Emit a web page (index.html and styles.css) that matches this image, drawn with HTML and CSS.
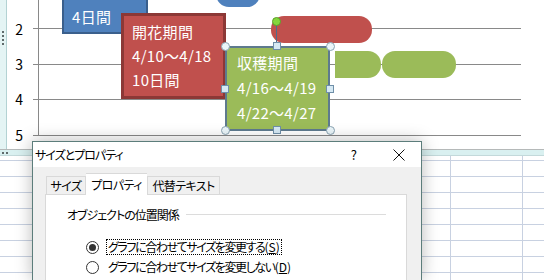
FILE: index.html
```html
<!DOCTYPE html>
<html lang="ja">
<head>
    <meta charset="UTF-8">
    <title>サイズとプロパティ</title>
    <link rel="stylesheet" href="styles.css">
</head>
<body>
    <div class="chart">
        <div class="frame-side">
            <span class="dot"></span><span class="dot"></span><span class="dot"></span><span class="dot"></span>
        </div>
        <div class="labels">
            <span>2</span>
            <span>3</span>
            <span>4</span>
            <span>5</span>
        </div>
        <div class="plot">
            <div class="grid-row"></div>
            <div class="grid-row"></div>
            <div class="grid-row"></div>
            <div class="grid-row"></div>
        </div>

        <!-- shapes on the chart canvas -->
        <div class="pill pill-blue"></div>
        <div class="box box-blue"><span>4日間</span></div>
        <div class="pill pill-red"></div>
        <div class="box box-red">
            <span>開花期間</span>
            <span>4/10～4/18</span>
            <span>10日間</span>
        </div>
        <div class="bar bar-green-a"></div>
        <div class="pill pill-green"></div>
        <div class="box box-green">
            <span>収穫期間</span>
            <span>4/16～4/19</span>
            <span>4/22～4/27</span>
        </div>

        <!-- selection handles -->
        <div class="rotate-line"></div>
        <div class="rotate-handle"></div>
        <div class="handle round" style="left:221px; top:42px"></div>
        <div class="handle round" style="left:326px; top:42px"></div>
        <div class="handle round" style="left:221px; top:126px"></div>
        <div class="handle round" style="left:326px; top:126px"></div>
        <div class="handle square" style="left:273px; top:42px"></div>
        <div class="handle square" style="left:221px; top:85px"></div>
        <div class="handle square" style="left:326px; top:85px"></div>
        <div class="handle square" style="left:273px; top:126px"></div>
    </div>
    <div class="chart-bottom">
        <span class="dot"></span><span class="dot"></span>
    </div>
    <div class="sheet"></div>

    <div class="dialog">
        <div class="titlebar">
            <span class="title">サイズとプロパティ</span>
            <span class="title-btn">?</span>
            <span class="title-btn">
                <svg width="12" height="12" viewBox="0 0 12 12"><path d="M0.5 0.5 L11.5 11.5 M11.5 0.5 L0.5 11.5" stroke="#111" stroke-width="1"/></svg>
            </span>
        </div>
        <div class="dialog-body">
            <div class="tabs">
                <div class="tab tab-size">サイズ</div>
                <div class="tab tab-active">プロパティ</div>
                <div class="tab tab-alt">代替テキスト</div>
            </div>
            <div class="panel">
                <div class="group-title">
                    <span>オブジェクトの位置関係</span>
                    <span class="rule"></span>
                </div>
                <div class="options">
                    <label class="option">
                        <span class="radio checked"></span>
                        <span class="option-text focus">グラフに合わせてサイズを変更する<span class="key">(<u>S</u>)</span></span>
                    </label>
                    <label class="option">
                        <span class="radio"></span>
                        <span class="option-text">グラフに合わせてサイズを変更しない<span class="key">(<u>D</u>)</span></span>
                    </label>
                </div>
            </div>
        </div>
    </div>
</body>
</html>
```

FILE: styles.css
```css
* {
    margin: 0;
    padding: 0;
    box-sizing: border-box;
}

body {
    width: 544px;
    height: 280px;
    overflow: hidden;
    position: relative;
    background: #fff;
    font-family: "Noto Sans CJK JP", sans-serif;
    color: #000;
}

/* chart area */
.chart {
    position: relative;
    display: flex;
    align-items: flex-start;
    height: 149px;
    overflow: hidden;
}

.frame-side {
    width: 7px;
    height: 100%;
    background: #e4f4f4;
    border-right: 1px solid #b3d2d3;
    display: flex;
    flex-direction: column;
    align-items: center;
    gap: 2px;
    padding-top: 31px;
}

.dot {
    width: 2px;
    height: 2px;
    background: #5f6b6b;
}

.labels {
    width: 26px;
    padding-top: 11px;
    display: flex;
    flex-direction: column;
}

.labels span {
    height: 35.4px;
    display: flex;
    align-items: center;
    justify-content: flex-end;
    padding-right: 10px;
    font-size: 14px;
    line-height: 1;
}

.plot {
    position: relative;
    width: 488px;
    margin-top: -6px;
}

.plot::before {
    content: "";
    position: absolute;
    left: 5px;
    top: 0;
    bottom: 0;
    width: 1px;
    background: #898989;
}

.grid-row {
    height: 35.4px;
    border-bottom: 1px solid #898989;
}

.box {
    position: absolute;
    display: flex;
    flex-direction: column;
    color: #fff;
    font-size: 15px;
    line-height: 24px;
    letter-spacing: 0.3px;
}

.box-blue {
    left: 62px;
    top: -20px;
    width: 86px;
    height: 54px;
    background: #4f81bd;
    border: 2px solid #3a5f8c;
    justify-content: flex-end;
    padding: 0 0 3px 8px;
}

.box-red {
    left: 121px;
    top: 13px;
    width: 105px;
    height: 86px;
    background: #c0504d;
    border: 3px solid #8c3836;
    padding: 4px 0 0 8px;
}

.box-green {
    left: 225px;
    top: 46px;
    width: 105px;
    height: 85px;
    background: #9bbb59;
    border: 2px solid #5e7a8e;
    padding: 2px 0 0 10px;
    line-height: 25px;
}

.pill {
    position: absolute;
    border-radius: 13px;
}

.pill-blue {
    left: 216px;
    top: -20px;
    width: 44px;
    height: 27px;
    background: #4f81bd;
}

.pill-red {
    left: 271px;
    top: 16px;
    width: 101px;
    height: 27px;
    background: #c0504d;
}

.bar {
    position: absolute;
}

.bar-green-a {
    left: 335px;
    top: 51px;
    width: 46px;
    height: 27px;
    background: #9bbb59;
    border-radius: 0 13px 13px 0;
}

.pill-green {
    left: 382px;
    top: 51px;
    width: 74px;
    height: 27px;
    background: #9bbb59;
}

.handle {
    position: absolute;
    width: 8px;
    height: 8px;
    background: #e3f1f8;
    border: 1px solid #6f8fa8;
}

.handle.round {
    width: 9px;
    height: 9px;
    border-radius: 50%;
    background: #eaf5f9;
    border-color: #8aa3b2;
}

.handle.square {
    width: 8px;
    height: 8px;
    background: #d6e9f4;
}

.rotate-line {
    position: absolute;
    left: 276px;
    top: 22px;
    width: 1px;
    height: 22px;
    background: #4f6d8c;
}

.rotate-handle {
    position: absolute;
    left: 272px;
    top: 17px;
    width: 9px;
    height: 9px;
    border-radius: 50%;
    background: #86d63c;
    border: 1px solid #5aa02a;
}

.chart-bottom {
    height: 7px;
    border-top: 1px solid #b5b9b9;
    background: #d9f0f0;
    border-bottom: 1px solid #c3d9da;
    display: flex;
    gap: 2px;
    align-items: center;
    padding-left: 2px;
}

/* worksheet behind the dialog */
.sheet {
    height: 124px;
    background-color: #fff;
    background-image:
        linear-gradient(to right, transparent 450px, #c8d1e1 450px, #c8d1e1 451px, transparent 451px, transparent 522px, #c8d1e1 522px, #c8d1e1 523px, transparent 523px),
        repeating-linear-gradient(to bottom, transparent 0, transparent 4px, #c8d1e1 4px, #c8d1e1 5px, transparent 5px, transparent 16px);
}

/* dialog window */
.dialog {
    position: absolute;
    left: 32px;
    top: 141px;
    width: 390px;
    height: 139px;
    overflow: hidden;
    border: 1px solid #5c7d7b;
    border-bottom: none;
    background: #f0f0f0;
    box-shadow: 0 0 16px rgba(0, 0, 0, 0.28);
    font-size: 12px;
    font-feature-settings: "palt";
    letter-spacing: -0.6px;
}

.titlebar {
    height: 25px;
    background: #fff;
    display: flex;
    align-items: center;
    padding-left: 2px;
}

.title {
    flex: 1;
    letter-spacing: -1px;
}

.title-btn {
    width: 45px;
    height: 100%;
    display: flex;
    align-items: center;
    justify-content: center;
    font-size: 13px;
}

.dialog-body {
    padding: 6px 0 0 13px;
}

.tabs {
    display: flex;
    align-items: flex-end;
    height: 21px;
}

.tab {
    height: 18px;
    border: 1px solid #d9d9d9;
    border-bottom: none;
    display: flex;
    align-items: center;
    justify-content: center;
    line-height: 1;
}

.tab-size {
    width: 40px;
}

.tab-active {
    width: 61px;
    height: 22px;
    background: #fff;
    position: relative;
    margin-bottom: -1px;
    border-left: none;
    border-right: none;
}

.tab-alt {
    width: 73px;
}

.panel {
    margin-left: -1px;
    width: 362px;
    height: 100px;
    background: #fff;
    border: 1px solid #d9d9d9;
    padding: 11px 20px 0 21px;
}

.group-title {
    display: flex;
    align-items: center;
    height: 16px;
    letter-spacing: -1px;
}

.rule {
    flex: 1;
    height: 1px;
    background: #dcdcdc;
    margin-left: 7px;
}

.options {
    display: flex;
    flex-direction: column;
    padding: 17px 0 0 19px;
    gap: 4px;
}

.option {
    display: flex;
    align-items: center;
    height: 16px;
    gap: 7px;
}

.radio {
    width: 13px;
    height: 13px;
    border: 1px solid #333;
    border-radius: 50%;
    background: #fff;
    display: flex;
    align-items: center;
    justify-content: center;
}

.radio.checked::after {
    content: "";
    width: 7px;
    height: 7px;
    border-radius: 50%;
    background: #333;
}

.option-text {
    padding: 0 1px;
    border: 1px solid transparent;
    line-height: 14px;
    letter-spacing: -1.4px;
}

.option-text .key {
    letter-spacing: 0;
}

.option-text.focus {
    border: 1px dotted #000;
}
```
